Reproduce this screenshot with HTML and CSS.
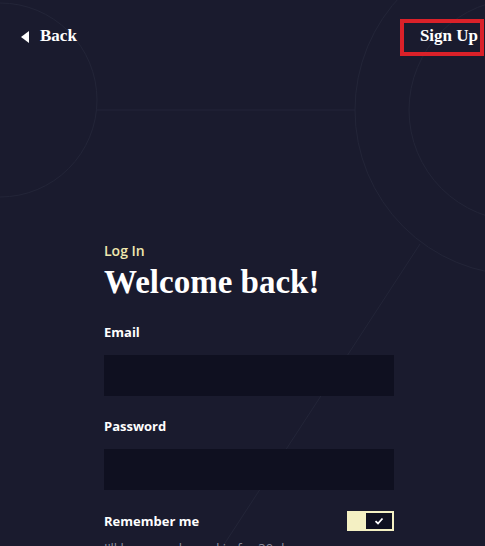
FILE: index.html
```html
<!DOCTYPE html>
<html lang="en">
<head>
    <meta charset="UTF-8">
    <meta name="viewport" content="width=device-width, initial-scale=1.0">
    <title>Log In</title>
    <link rel="stylesheet" href="styles.css">
</head>
<body>
    <svg class="backdrop" width="485" height="546" viewBox="0 0 485 546">
        <circle cx="0" cy="100" r="97" />
        <line x1="96" y1="110" x2="355" y2="110" />
        <circle cx="520" cy="110" r="165" />
        <circle cx="520" cy="110" r="111" />
        <line x1="420" y1="244" x2="210" y2="566" />
    </svg>

    <div class="topbar">
        <a class="back-link" href="#">
            <svg class="back-arrow" width="8" height="12" viewBox="0 0 8 12"><polygon points="8,0 8,12 0,6" /></svg>
            Back
        </a>
        <a class="signup-link" href="#">Sign Up</a>
    </div>

    <div class="login">
        <div class="eyebrow">Log In</div>
        <h1>Welcome back!</h1>
        <form>
            <div class="field">
                <label for="email">Email</label>
                <input type="email" id="email">
            </div>
            <div class="field">
                <label for="password">Password</label>
                <input type="password" id="password">
            </div>
            <div class="remember">
                <span class="remember-label">Remember me</span>
                <span class="toggle">
                    <span class="knob">
                        <svg width="10" height="8" viewBox="0 0 10 8"><polyline points="1.5,4.2 4,6.5 8.5,1.5" /></svg>
                    </span>
                </span>
            </div>
            <p class="hint">I'll keep you logged in for 30 days</p>
        </form>
    </div>
</body>
</html>
```

FILE: styles.css
```css
body {
    margin: 0;
    height: 546px;
    overflow: hidden;
    position: relative;
    background-color: #1a1b2e;
    color: #fff;
    font-family: "Open Sans", sans-serif;
}
.backdrop {
    position: absolute;
    top: 0;
    left: 0;
    z-index: 0;
}
.backdrop circle,
.backdrop line {
    fill: none;
    stroke: #232538;
    stroke-width: 1;
}
.topbar {
    position: relative;
    z-index: 1;
    display: flex;
    justify-content: space-between;
    align-items: flex-start;
    padding: 19px 1px 0 21px;
}
.topbar a {
    color: #fff;
    text-decoration: none;
    font-family: "Liberation Serif", serif;
    font-weight: bold;
    font-size: 17px;
    line-height: 20px;
}
.back-link {
    display: flex;
    align-items: center;
    gap: 11px;
    margin-top: 7px;
}
.back-arrow {
    fill: #fff;
    margin-top: 1px;
}
.signup-link {
    display: inline-block;
    border: 4px solid #da2129;
    padding: 3px 2px 6px 16px;
}
.login {
    position: relative;
    z-index: 1;
    width: 290px;
    margin: 185px 0 0 104px;
}
.eyebrow {
    color: #efe7ae;
    font-weight: 600;
    font-size: 14px;
    line-height: 20px;
}
h1 {
    margin: 1px 0 1px;
    font-family: "Liberation Serif", serif;
    font-weight: bold;
    font-size: 33px;
    line-height: 40px;
}
form {
    margin: 0;
}
.field {
    margin-top: 21px;
}
.field label {
    display: block;
    font-weight: 700;
    font-size: 13px;
    line-height: 18px;
    margin-bottom: 14px;
}
.field input {
    display: block;
    box-sizing: border-box;
    width: 100%;
    height: 41px;
    border: none;
    background-color: #0f1020;
    color: #fff;
    padding: 0 12px;
    font-size: 14px;
}
.remember {
    display: flex;
    justify-content: space-between;
    align-items: center;
    height: 20px;
    margin-top: 21px;
}
.remember-label {
    font-weight: 700;
    font-size: 13px;
    line-height: 20px;
}
.toggle {
    display: flex;
    justify-content: flex-end;
    box-sizing: border-box;
    width: 47px;
    height: 20px;
    padding: 2px;
    background-color: #f4f0c3;
}
.knob {
    display: flex;
    align-items: center;
    justify-content: center;
    width: 26px;
    height: 16px;
    background-color: #0f1020;
}
.knob polyline {
    fill: none;
    stroke: #fff;
    stroke-width: 1.8;
}
.hint {
    margin: 8px 0 0;
    color: #8b8d9c;
    font-size: 13px;
    line-height: 18px;
}
```
